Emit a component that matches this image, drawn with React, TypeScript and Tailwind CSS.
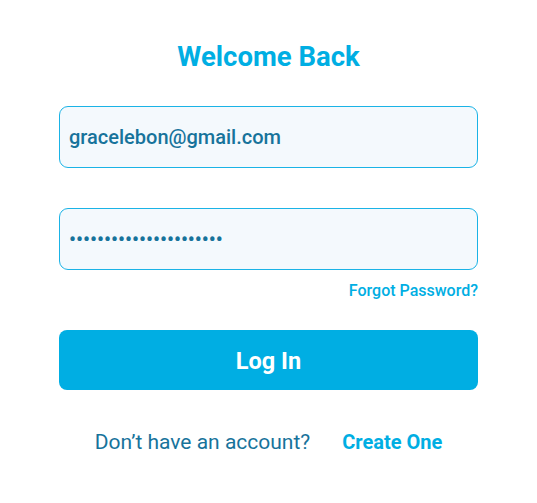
import { useState } from "react";

const App = () => {
  const [email, setEmail] = useState("gracelebon@gmail.com");
  const [password, setPassword] = useState("gracelebon2024pass!!xy");

  return (
    <div
      className="min-h-[503px] w-full bg-white"
      style={{ fontFamily: "Roboto, 'Noto Sans', sans-serif" }}
    >
      <div className="mx-auto flex w-[419px] flex-col pt-[40px]">
        <h1 className="text-center text-[27.5px] font-bold leading-[34px] text-[#00aee3]">
          Welcome Back
        </h1>

        <input
          type="email"
          value={email}
          onChange={(e) => setEmail(e.target.value)}
          className="mt-[32px] h-[62px] w-full rounded-[9px] border border-[#1ab3e6] bg-[#f4f9fd] px-[9px] text-[20px] font-medium text-[#17739b] outline-none"
        />

        <input
          type="password"
          value={password}
          onChange={(e) => setPassword(e.target.value)}
          className="mt-[40px] h-[62px] w-full rounded-[9px] border border-[#1ab3e6] bg-[#f4f9fd] px-[9px] text-[20px] font-medium text-[#17739b] outline-none"
        />

        <div className="mt-[10px] flex justify-end">
          <a className="text-[16px] font-medium leading-[22px] text-[#00aee3]">
            Forgot Password?
          </a>
        </div>

        <button className="mt-[28px] h-[60px] w-full rounded-[8px] bg-[#00aee3] pt-[3px] text-[23.5px] font-bold text-white">
          Log In
        </button>

        <div className="mt-[38px] flex items-center justify-center gap-[32px]">
          <span className="text-[21px] leading-[28px] text-[#17739b]">
            Don’t have an account?
          </span>
          <a className="text-[20px] font-bold leading-[28px] text-[#00aee3]">
            Create One
          </a>
        </div>
      </div>
    </div>
  );
};

export default App;
